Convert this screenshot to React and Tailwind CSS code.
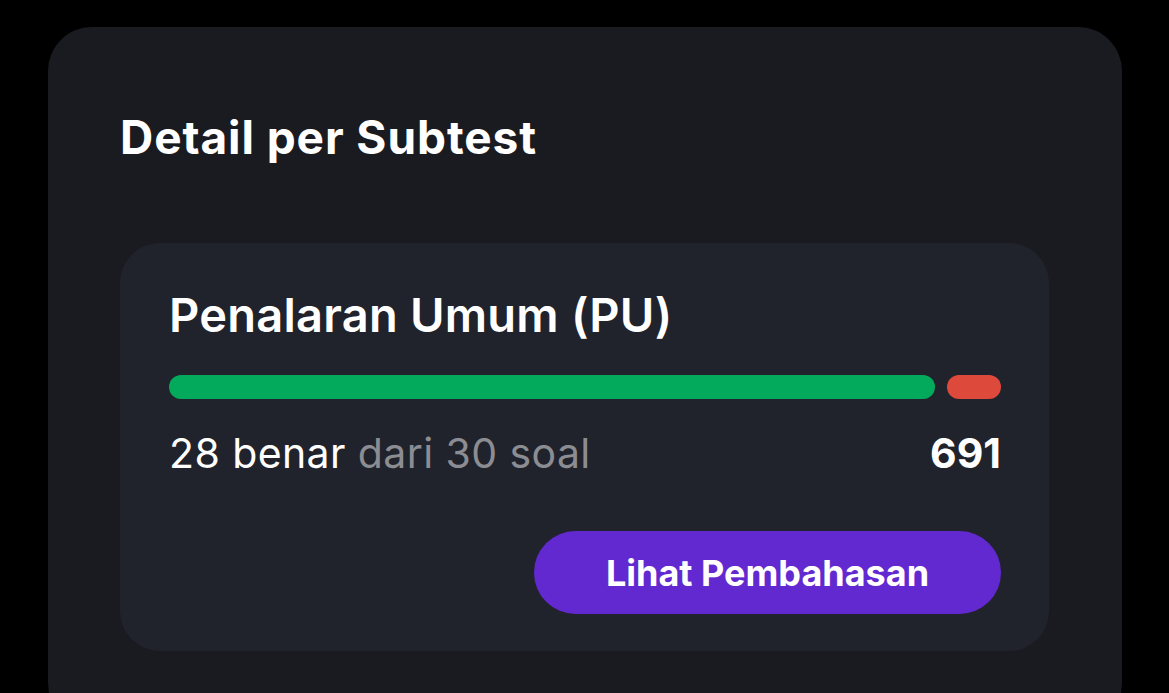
export default function App() {
  return (
    <div
      className="min-h-[693px] w-full bg-black overflow-hidden"
      style={{ fontFamily: "Inter, 'Noto Sans', sans-serif" }}
    >
      <div className="ml-[48px] mt-[27px] w-[1074px] h-[700px] rounded-[44px] bg-[#1a1b21] px-[72px] pt-[82px]">
        <h2 className="text-[46px] leading-[56px] font-bold text-white tracking-[0.02em]">
          Detail per Subtest
        </h2>

        <div className="mt-[78px] w-[929px] rounded-[40px] bg-[#21232c] pl-[49px] pr-[48px] pt-[44px] pb-[37px]">
          <h3 className="text-[47px] leading-[56px] font-semibold text-white tracking-[0.005em]">
            Penalaran Umum (PU)
          </h3>

          {/* Progress */}
          <div className="mt-[32px] flex gap-[12px]">
            <div className="h-[24px] w-[766px] rounded-full bg-[#04aa5b]" />
            <div className="h-[24px] flex-1 rounded-full bg-[#dd4a3b]" />
          </div>

          <div className="mt-[29px] flex items-center justify-between">
            <p className="text-[41px] leading-[50px] tracking-[0.01em] text-white">
              28 benar <span className="text-[#8c8d93]">dari 30 soal</span>
            </p>
            <span className="text-[41px] leading-[50px] font-bold text-white">691</span>
          </div>

          <div className="mt-[53px] flex justify-end">
            <button className="h-[83px] w-[467px] rounded-full bg-[#6229d1] text-[36px] font-bold text-white">
              Lihat Pembahasan
            </button>
          </div>
        </div>
      </div>
    </div>
  );
}
